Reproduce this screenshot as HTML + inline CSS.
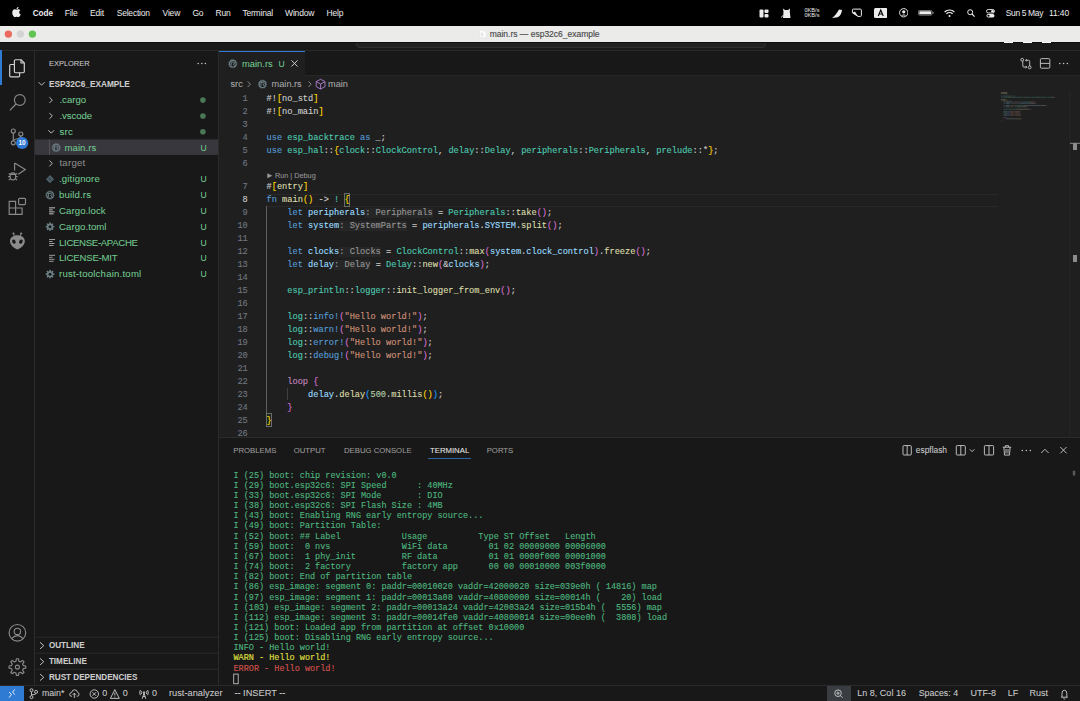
<!DOCTYPE html>
<html><head><meta charset="utf-8">
<style>
*{margin:0;padding:0;box-sizing:border-box}
html,body{width:1080px;height:701px;overflow:hidden;background:#181818;font-family:"Liberation Sans",sans-serif;}
.a{position:absolute;white-space:pre;}
.cl,.ln,.term{-webkit-text-stroke:0.12px currentColor;}
#side .a,#panel .a,#status .a,#editor .a{-webkit-text-stroke:0.06px currentColor;}
#menubar{position:absolute;left:0;top:0;width:1080px;height:26px;background:#000;}
#menubar .m{position:absolute;top:0;height:26px;line-height:26.5px;color:#ececec;font-size:8.5px;letter-spacing:-0.2px;}
#titlebar{position:absolute;left:0;top:26px;width:1080px;height:16.4px;background:#ebebea;z-index:2}
#strip{position:absolute;left:0;top:42px;width:1080px;height:9px;background:#191919;border-top:1px solid #0e0e0e;border-bottom:1px solid #292929;}
#act{position:absolute;left:0;top:51px;width:35px;height:634px;background:#181818;border-right:1px solid #2b2b2b;}
#side{position:absolute;left:35px;top:51px;width:184px;height:634px;background:#181818;border-right:1px solid #2b2b2b;}
#editor{position:absolute;left:219px;top:51px;width:861px;height:386px;background:#1f1f1f;}
#tabs{position:absolute;left:0;top:0;width:861px;height:24.6px;background:#181818;border-bottom:1px solid #262626;}
#panel{position:absolute;left:219px;top:437px;width:861px;height:248px;background:#181818;border-top:1px solid #2b2b2b;}
#status{position:absolute;left:0;top:685px;width:1080px;height:16px;background:#181818;border-top:1px solid #2b2b2b;}
.code{font-family:"Liberation Mono",monospace;font-size:8.666px;color:#cccccc;}
.ln{position:absolute;left:0;width:29px;padding-top:1.2px;text-align:right;color:#6e7681;font-family:"Liberation Mono",monospace;font-size:8.666px;}
.cl{position:absolute;left:47px;padding-top:1.2px;white-space:pre;font-family:"Liberation Mono",monospace;font-size:8.666px;color:#cccccc;height:12.9px;line-height:12.9px;}
.k{color:#569cd6}.t{color:#4ec9b0}.f{color:#dcdcaa}.v{color:#9cdcfe}.s{color:#ce9178}.n{color:#b5cea8}.p{color:#c586c0}
.b1{color:#ffd700}.b2{color:#da70d6}.b3{color:#179fff}
.h{color:#969696;background:#262626;}
.term{position:absolute;left:14px;padding-top:0px;padding-left:0.4px;white-space:pre;font-family:"Liberation Mono",monospace;font-size:8.5px;color:#4db67f;height:10.15px;line-height:10.15px;}
.si{position:absolute;left:0;width:183px;height:15.82px;line-height:15.82px;font-size:9.6px;color:#73c991;white-space:pre;}
.st{position:absolute;top:0;height:15px;line-height:15px;font-size:8.4px;color:#cccccc;white-space:pre;}
</style></head>
<body>
<div id="menubar">
<svg class="a" style="left:11.9px;top:7.4px" width="9" height="9.9" viewBox="0 0 170 200"><path fill="#ececec" d="M150 150c-8 18-12 26-22 42-14 21-34 48-59 48-22 0-28-14-58-14S-22 240-44 240s-0 0 0 0z" transform="translate(0,0)" style="display:none"/><path fill="#ececec" d="M140 106c0-26 21-38 22-39-12-18-31-20-37-20-16-2-31 9-39 9-8 0-20-9-34-9C34 48 17 58 8 74c-19 33-5 81 13 107 9 13 19 27 33 27 13-1 18-9 34-9 16 0 20 9 34 8 14 0 23-13 32-26 10-15 14-29 14-30 0 0-28-11-28-45zM115 30c7-9 12-21 11-33-10 1-23 7-30 16-7 8-13 20-11 32 11 1 23-6 30-15z"/></svg>
<div class="m" style="left:32.7px;font-weight:bold;font-size:8.2px;letter-spacing:0;line-height:27px">Code</div>
<div class="m" style="left:64.7px">File</div>
<div class="m" style="left:90px">Edit</div>
<div class="m" style="left:116.7px">Selection</div>
<div class="m" style="left:162.6px">View</div>
<div class="m" style="left:192.4px">Go</div>
<div class="m" style="left:215.5px">Run</div>
<div class="m" style="left:242.4px">Terminal</div>
<div class="m" style="left:285.1px">Window</div>
<div class="m" style="left:326.6px">Help</div>
<!-- right icons -->
<svg class="a" style="left:758.5px;top:8.5px" width="10" height="9" viewBox="0 0 10 9"><rect x="0.5" y="0.5" width="4" height="8" rx="1" fill="#ececec"/><rect x="5.5" y="0.5" width="4" height="3.5" rx="1" fill="#ececec"/><rect x="5.5" y="5" width="4" height="3.5" rx="1" fill="#ececec"/></svg>
<svg class="a" style="left:781px;top:8px" width="11" height="10" viewBox="0 0 11 10"><path d="M2 10 L2.5 4 L2 0.5 L4 2 L7 2 L9 0.5 L8.8 4 L9.5 10 Z" fill="#ececec"/><path d="M0.5 9.5 Q1 7 2.5 8" stroke="#ececec" stroke-width="0.8" fill="none"/></svg>
<div class="a" style="left:804.5px;top:7.5px;font-size:5.6px;line-height:5px;color:#ececec">0KB/s<br>0KB/s</div>
<svg class="a" style="left:832px;top:8.5px" width="10" height="9" viewBox="0 0 10 9"><path d="M0 9 C3 7 5 4 7 0.5 L10 1 C9.5 5 8 8 4 8.5 Z" fill="#ececec"/></svg>
<svg class="a" style="left:846px;top:4px" width="20" height="18" viewBox="846 4 20 18"><path d="M853.4 9.1 H860.4 Q861.4 9.1 861.4 10.1 V15.5 Q861.4 16.4 860.4 16.4 H858 L852.4 12.8 V10.1 Q852.4 9.1 853.4 9.1 Z" fill="none" stroke="#ececec" stroke-width="1"/><path d="M852.4 12.8 L855 11.4 L858 16.4 Z" fill="#ececec"/></svg>
<svg class="a" style="left:873.5px;top:8px" width="13.5" height="10" viewBox="0 0 13.5 10"><rect x="0" y="0" width="13.5" height="10" rx="1.5" fill="#ececec"/><path d="M4.3 8 L6.75 2 L9.2 8 M5.2 6 H8.3" stroke="#000" stroke-width="1.1" fill="none"/></svg>
<svg class="a" style="left:898.5px;top:8px" width="9.5" height="9.5" viewBox="0 0 10 10"><circle cx="5" cy="5" r="4.4" fill="none" stroke="#ececec" stroke-width="1"/><circle cx="5" cy="4" r="1.7" fill="#ececec"/><path d="M2 8 Q5 5.5 8 8" fill="#ececec"/></svg>
<svg class="a" style="left:918px;top:10.3px" width="16" height="5.5" viewBox="0 0 16 5.5"><rect x="0.4" y="0.4" width="13.6" height="4.7" rx="1.2" fill="none" stroke="#9a9a9a" stroke-width="0.8"/><rect x="1.3" y="1.2" width="11.8" height="3.1" rx="0.6" fill="#ececec"/><rect x="14.5" y="1.8" width="1" height="2" fill="#9a9a9a"/></svg>
<svg class="a" style="left:944.3px;top:8.7px" width="11" height="8" viewBox="0 0 11 8"><path d="M0.6 3 A7 7 0 0 1 10.4 3" stroke="#ececec" stroke-width="1.2" fill="none"/><path d="M2.4 4.8 A4.4 4.4 0 0 1 8.6 4.8" stroke="#ececec" stroke-width="1.2" fill="none"/><circle cx="5.5" cy="7" r="1" fill="#ececec"/></svg>
<svg class="a" style="left:966.8px;top:9px" width="8" height="8" viewBox="0 0 8 8"><circle cx="3.2" cy="3.2" r="2.5" stroke="#ececec" stroke-width="1" fill="none"/><path d="M5 5 L7.6 7.6" stroke="#ececec" stroke-width="1.1"/></svg>
<svg class="a" style="left:986px;top:8.5px" width="9" height="9" viewBox="0 0 9 9"><rect x="0.5" y="0.5" width="8" height="3.5" rx="1.7" fill="none" stroke="#ececec" stroke-width="0.9"/><circle cx="6.5" cy="2.25" r="1.3" fill="#ececec"/><rect x="0.5" y="5" width="8" height="3.5" rx="1.7" fill="#ececec"/><circle cx="2.5" cy="6.75" r="1.1" fill="#000"/></svg>
<div class="m" style="left:1005.8px;font-size:8.5px;letter-spacing:-0.38px">Sun 5 May</div>
<div class="m" style="left:1048.9px;font-size:8.5px;letter-spacing:-0.1px">11:40</div>
</div>
<div id="titlebar">
<div class="a" style="left:1004.2px;top:15.6px;width:8.7px;height:1.3px;background:#fafafa"></div><div class="a" style="left:1022.9px;top:15.6px;width:9.1px;height:1.3px;background:#fafafa"></div><div class="a" style="left:1041.7px;top:15.6px;width:9.1px;height:1.3px;background:#fafafa"></div>
<svg class="a" style="left:0;top:0" width="40" height="16.7" viewBox="0 26 40 16.7"><circle cx="8.35" cy="34.1" r="3.7" fill="#ec6a5e"/><circle cx="20.4" cy="34.1" r="3.7" fill="#d4d4d4"/><circle cx="32.4" cy="34.1" r="3.7" fill="#61c454"/></svg>
<svg class="a" style="left:479px;top:4px" width="8" height="8" viewBox="0 0 8 8"><path d="M0.5 0.3 H5 L7.3 2.6 V7.7 H0.5 Z" fill="#fbfbfb" stroke="#d8d8d8" stroke-width="0.4"/><path d="M1.8 3 H4 M1.8 4.3 H4.8 M1.8 5.6 H4" stroke="#c8c8c8" stroke-width="0.5"/></svg>
<div class="a" style="left:489.7px;top:1px;height:14px;line-height:14px;font-size:8.49px;color:#4a4a4a;-webkit-text-stroke:0.15px #4a4a4a">main.rs — esp32c6_example</div>
</div>
<div id="strip"><div class="a" style="left:355.5px;top:0;width:410px;height:4.6px;background:#212121;border:1px solid #2e2e2e;border-top:none;border-radius:0 0 4px 4px"></div></div>
<div id="act">
<div class="a" style="left:0;top:-1px;width:1.5px;height:35px;background:#2f7ad3"></div>
<svg class="a" style="left:0;top:0" width="35" height="634" viewBox="0 0 35 634">
 <g fill="none" stroke="#d4d4d4" stroke-width="1.15" stroke-linejoin="round">
  <path d="M14.2 13.5 H10.8 Q9.7 13.5 9.7 14.6 V24.7 Q9.7 25.8 10.8 25.8 H18.5 Q19.6 25.8 19.6 24.7 V21.8"/>
  <path d="M15.5 8.7 H21 L24.3 12 V20.6 Q24.3 21.7 23.2 21.7 H15.5 Q14.4 21.7 14.4 20.6 V9.8 Q14.4 8.7 15.5 8.7 Z"/>
  <path d="M21 8.7 V12 H24.3"/>
 </g>
 <g fill="none" stroke="#8a8a8a" stroke-width="1.15">
  <circle cx="19.8" cy="49" r="5.4"/>
  <path d="M16 53 L9.9 59.4"/>
  <circle cx="13.3" cy="80" r="2"/>
  <circle cx="20.8" cy="83" r="2"/>
  <circle cx="13.3" cy="91.8" r="2"/>
  <path d="M13.3 82 V89.8"/>
  <path d="M20.8 85 Q20.8 87.4 17.6 87.8 Q14.2 88.2 13.3 89.6"/>
  <path d="M14.6 112 V119.4 M14.6 112 L25.3 118.6 L18.3 123.3"/>
  <ellipse cx="12.9" cy="125.4" rx="2.75" ry="3.5"/>
  <path d="M10.5 123.3 H15.3 M8.7 122.4 L10.3 123.4 M17.1 122.4 L15.5 123.4 M8.2 125.6 H10.1 M15.7 125.6 H17.6 M8.7 128.9 L10.3 127.9 M17.1 128.9 L15.5 127.9"/>
  <path d="M9.2 150.4 H15.6 V163.4 H9.2 Z M9.2 157 H22.1 V163.4 H15.6"/>
  <rect x="18.6" y="147.3" width="6.9" height="6.3" rx="1"/>
 </g>
 <circle cx="22.1" cy="92" r="6.1" fill="#2f7ad3"/>
 <text x="22.1" y="94.3" text-anchor="middle" font-family="Liberation Sans" font-weight="bold" font-size="6.4" fill="#fff">10</text>
 <g fill="#8b8b8b">
  <path d="M17.4 184.3 C13 184.3 10 186.8 10 190.3 C10 194 14.3 197.5 17.4 198.6 C20.5 197.5 24.8 194 24.8 190.3 C24.8 186.8 21.8 184.3 17.4 184.3 Z"/>
  <circle cx="13.5" cy="182.5" r="1.1"/><circle cx="21.1" cy="182.5" r="1.1"/>
  <path d="M13.5 182.5 L14.2 185 M21.1 182.5 L20.4 185" stroke="#8b8b8b" stroke-width="0.8"/>
 </g>
 <g fill="#181818"><ellipse cx="13.9" cy="190.6" rx="1.7" ry="2.2" transform="rotate(-30 13.9 190.6)"/><ellipse cx="20.9" cy="190.6" rx="1.7" ry="2.2" transform="rotate(30 20.9 190.6)"/></g>
</svg>
<svg class="a" style="left:0;top:565px" width="35" height="70" viewBox="0 0 35 70">
 <g fill="none" stroke="#8a8a8a" stroke-width="1.15">
  <circle cx="17.4" cy="16.8" r="8.3"/>
  <circle cx="17.4" cy="15.4" r="3.2"/>
  <path d="M11.6 22.6 Q17.4 16.5 23.2 22.6"/>
  <path d="M16.35 42.77 L18.45 42.77 L18.82 45.17 L20.59 45.90 L22.55 44.46 L24.04 45.95 L22.60 47.91 L23.33 49.68 L25.73 50.05 L25.73 52.15 L23.33 52.52 L22.60 54.29 L24.04 56.25 L22.55 57.74 L20.59 56.30 L18.82 57.03 L18.45 59.43 L16.35 59.43 L15.98 57.03 L14.21 56.30 L12.25 57.74 L10.76 56.25 L12.20 54.29 L11.47 52.52 L9.07 52.15 L9.07 50.05 L11.47 49.68 L12.20 47.91 L10.76 45.95 L12.25 44.46 L14.21 45.90 L15.98 45.17 Z" stroke-linejoin="round"/>
  <circle cx="17.4" cy="51.1" r="2"/>
 </g>
</svg>
</div>
<div id="side">
<div class="a" style="left:14.00px;top:4.70px;height:16px;line-height:16px;font-size:7.45px;color:#cccccc">EXPLORER</div><svg class="a" style="left:0;top:0" width="184" height="634" viewBox="35 51 184 634"><circle cx="198.2" cy="63.6" r="0.75" fill="#cccccc"/><circle cx="201.8" cy="63.6" r="0.75" fill="#cccccc"/><circle cx="205.4" cy="63.6" r="0.75" fill="#cccccc"/><path d="M38.6 82.2 L41.6 85.2 L44.6 82.2" fill="none" stroke="#cccccc" stroke-width="0.9"/><rect x="35" y="139.4" width="183" height="15.5" fill="#37373d"/><path d="M49.5 139.4 V154.9" stroke="#585858" stroke-width="0.8"/><path d="M49.4 97.22 L52.3 100.12 L49.4 103.02" fill="none" stroke="#cccccc" stroke-width="0.9"/><path d="M49.4 113.04 L52.3 115.94 L49.4 118.84" fill="none" stroke="#cccccc" stroke-width="0.9"/><path d="M48.3 130.26 L51.2 133.16 L54.1 130.26" fill="none" stroke="#cccccc" stroke-width="0.9"/><path d="M49.4 160.50 L52.3 163.40 L49.4 166.30" fill="none" stroke="#cccccc" stroke-width="0.9"/><circle cx="202.9" cy="100.12" r="2.8" fill="#4a7856"/><circle cx="202.9" cy="115.94" r="2.8" fill="#4a7856"/><circle cx="202.9" cy="131.76" r="2.8" fill="#4a7856"/><circle cx="56.2" cy="147.57999999999998" r="3.3" fill="none" stroke="#6d8086" stroke-width="1.1"/><circle cx="56.2" cy="147.57999999999998" r="4.1" fill="none" stroke="#6d8086" stroke-width="0.9" stroke-dasharray="0.9 1.03"/><path d="M54.6 149.48 V145.98 H57.0 Q58.0 145.98 58.0 146.98 Q58.0 147.88 56.800000000000004 147.88 L58.1 149.48" fill="none" stroke="#6d8086" stroke-width="1"/><path d="M50 175.12 L54.1 179.22 L50 183.32 L45.9 179.22 Z" fill="#4b5f69"/><path d="M48.6 177.82 L51.2 180.42" stroke="#181818" stroke-width="0.7"/><circle cx="50.0" cy="195.04000000000002" r="3.3" fill="none" stroke="#6d8086" stroke-width="1.1"/><circle cx="50.0" cy="195.04000000000002" r="4.1" fill="none" stroke="#6d8086" stroke-width="0.9" stroke-dasharray="0.9 1.03"/><path d="M48.4 196.94000000000003 V193.44000000000003 H50.8 Q51.8 193.44000000000003 51.8 194.44000000000003 Q51.8 195.34000000000003 50.6 195.34000000000003 L51.9 196.94000000000003" fill="none" stroke="#6d8086" stroke-width="1"/><g stroke="#d6d6d6" stroke-width="0.9"><path d="M49.099999999999994 207.86 H55.099999999999994"/><path d="M49.099999999999994 209.86 H52.599999999999994"/><path d="M49.099999999999994 211.86 H54.599999999999994"/><path d="M49.099999999999994 213.86 H53.599999999999994"/></g><path d="M54.36 226.06 L54.36 227.30 L53.10 227.48 L52.75 228.31 L53.52 229.32 L52.64 230.20 L51.63 229.43 L50.80 229.78 L50.62 231.04 L49.38 231.04 L49.20 229.78 L48.37 229.43 L47.36 230.20 L46.48 229.32 L47.25 228.31 L46.90 227.48 L45.64 227.30 L45.64 226.06 L46.90 225.88 L47.25 225.05 L46.48 224.04 L47.36 223.16 L48.37 223.93 L49.20 223.58 L49.38 222.32 L50.62 222.32 L50.80 223.58 L51.63 223.93 L52.64 223.16 L53.52 224.04 L52.75 225.05 L53.10 225.88 Z" fill="#6d8086"/><circle cx="50" cy="226.68" r="1.5" fill="#181818"/><g stroke="#a8a8a8" stroke-width="0.9"><path d="M49.099999999999994 239.5 H55.099999999999994"/><path d="M49.099999999999994 241.5 H52.599999999999994"/><path d="M49.099999999999994 243.5 H54.599999999999994"/><path d="M49.099999999999994 245.5 H53.599999999999994"/></g><g stroke="#a8a8a8" stroke-width="0.9"><path d="M49.099999999999994 255.32 H55.099999999999994"/><path d="M49.099999999999994 257.32 H52.599999999999994"/><path d="M49.099999999999994 259.32 H54.599999999999994"/><path d="M49.099999999999994 261.32 H53.599999999999994"/></g><path d="M54.36 273.52 L54.36 274.76 L53.10 274.94 L52.75 275.77 L53.52 276.78 L52.64 277.66 L51.63 276.89 L50.80 277.24 L50.62 278.50 L49.38 278.50 L49.20 277.24 L48.37 276.89 L47.36 277.66 L46.48 276.78 L47.25 275.77 L46.90 274.94 L45.64 274.76 L45.64 273.52 L46.90 273.34 L47.25 272.51 L46.48 271.50 L47.36 270.62 L48.37 271.39 L49.20 271.04 L49.38 269.78 L50.62 269.78 L50.80 271.04 L51.63 271.39 L52.64 270.62 L53.52 271.50 L52.75 272.51 L53.10 273.34 Z" fill="#6d8086"/><circle cx="50" cy="274.14" r="1.5" fill="#181818"/><path d="M35 637.2 H218" stroke="#2b2b2b" stroke-width="1"/><path d="M35 653.2 H218" stroke="#2b2b2b" stroke-width="1"/><path d="M35 669.3 H218" stroke="#2b2b2b" stroke-width="1"/><path d="M40.0 642.30 L43.8 645.60 L40.0 648.90" fill="none" stroke="#cccccc" stroke-width="0.9"/><path d="M40.0 658.40 L43.8 661.70 L40.0 665.00" fill="none" stroke="#cccccc" stroke-width="0.9"/><path d="M40.0 674.00 L43.8 677.30 L40.0 680.60" fill="none" stroke="#cccccc" stroke-width="0.9"/></svg>
<div class="a" style="left:14.00px;top:26.10px;height:16px;line-height:16px;font-size:8.28px;font-weight:bold;color:#cccccc">ESP32C6_EXAMPLE</div><div class="a" style="left:24.40px;top:41.12px;height:16px;line-height:16px;font-size:9.6px;color:#73c991;letter-spacing:0.024px">.cargo</div><div class="a" style="left:24.40px;top:56.94px;height:16px;line-height:16px;font-size:9.6px;color:#73c991;letter-spacing:-0.047px">.vscode</div><div class="a" style="left:24.40px;top:72.76px;height:16px;line-height:16px;font-size:9.6px;color:#73c991;letter-spacing:0.352px">src</div><div class="a" style="left:29.50px;top:88.58px;height:16px;line-height:16px;font-size:9.6px;color:#73c991;letter-spacing:0.055px">main.rs</div><div class="a" style="left:24.40px;top:104.40px;height:16px;line-height:16px;font-size:9.6px;color:#8c8c8c;letter-spacing:0.271px">target</div><div class="a" style="left:24.00px;top:120.22px;height:16px;line-height:16px;font-size:9.6px;color:#73c991;letter-spacing:0.145px">.gitignore</div><div class="a" style="left:24.00px;top:136.04px;height:16px;line-height:16px;font-size:9.6px;color:#73c991;letter-spacing:0.150px">build.rs</div><div class="a" style="left:24.00px;top:151.86px;height:16px;line-height:16px;font-size:9.6px;color:#73c991;letter-spacing:0.090px">Cargo.lock</div><div class="a" style="left:24.00px;top:167.68px;height:16px;line-height:16px;font-size:9.6px;color:#73c991;letter-spacing:0.061px">Cargo.toml</div><div class="a" style="left:24.00px;top:183.50px;height:16px;line-height:16px;font-size:9.6px;color:#73c991;letter-spacing:-0.311px">LICENSE-APACHE</div><div class="a" style="left:24.00px;top:199.32px;height:16px;line-height:16px;font-size:9.6px;color:#73c991;letter-spacing:-0.211px">LICENSE-MIT</div><div class="a" style="left:24.00px;top:215.14px;height:16px;line-height:16px;font-size:9.6px;color:#73c991;letter-spacing:0.215px">rust-toolchain.toml</div><div class="a" style="left:165.60px;top:88.58px;height:16px;line-height:16px;font-size:8.6px;color:#73c991">U</div><div class="a" style="left:165.60px;top:120.22px;height:16px;line-height:16px;font-size:8.6px;color:#73c991">U</div><div class="a" style="left:165.60px;top:136.04px;height:16px;line-height:16px;font-size:8.6px;color:#73c991">U</div><div class="a" style="left:165.60px;top:151.86px;height:16px;line-height:16px;font-size:8.6px;color:#73c991">U</div><div class="a" style="left:165.60px;top:167.68px;height:16px;line-height:16px;font-size:8.6px;color:#73c991">U</div><div class="a" style="left:165.60px;top:183.50px;height:16px;line-height:16px;font-size:8.6px;color:#73c991">U</div><div class="a" style="left:165.60px;top:199.32px;height:16px;line-height:16px;font-size:8.6px;color:#73c991">U</div><div class="a" style="left:165.60px;top:215.14px;height:16px;line-height:16px;font-size:8.6px;color:#73c991">U</div><div class="a" style="left:13.90px;top:587.10px;height:16px;line-height:16px;font-size:8.15px;font-weight:bold;color:#cccccc">OUTLINE</div><div class="a" style="left:13.90px;top:603.30px;height:16px;line-height:16px;font-size:8.15px;font-weight:bold;color:#cccccc">TIMELINE</div><div class="a" style="left:13.90px;top:619.20px;height:16px;line-height:16px;font-size:8.15px;font-weight:bold;color:#cccccc">RUST DEPENDENCIES</div></div>
<div id="editor">
<div id="tabs"></div>
<div class="a" style="left:0;top:0;width:86px;height:25.6px;background:#1f1f1f;border-top:1px solid #2f7ad3;"></div><svg class="a" style="left:0;top:0" width="861" height="386" viewBox="219 51 861 386"><circle cx="232.8" cy="63.7" r="3.3" fill="none" stroke="#6d8086" stroke-width="1.1"/><circle cx="232.8" cy="63.7" r="4.1" fill="none" stroke="#6d8086" stroke-width="0.9" stroke-dasharray="0.9 1.03"/><path d="M231.20000000000002 65.60000000000001 V62.1 H233.60000000000002 Q234.60000000000002 62.1 234.60000000000002 63.1 Q234.60000000000002 64.0 233.4 64.0 L234.70000000000002 65.60000000000001" fill="none" stroke="#6d8086" stroke-width="1"/><path d="M291.4 60.3 L297.6 66.5 M297.6 60.3 L291.4 66.5" stroke="#cccccc" stroke-width="1"/><path d="M247.6 81.4 L250.4 84.2 L247.6 87" fill="none" stroke="#a0a0a0" stroke-width="0.8"/><path d="M308.4 81.4 L311.2 84.2 L308.4 87" fill="none" stroke="#a0a0a0" stroke-width="0.8"/><circle cx="262.5" cy="84.2" r="3.3" fill="none" stroke="#6d8086" stroke-width="1.1"/><circle cx="262.5" cy="84.2" r="4.1" fill="none" stroke="#6d8086" stroke-width="0.9" stroke-dasharray="0.9 1.03"/><path d="M260.9 86.10000000000001 V82.60000000000001 H263.3 Q264.3 82.60000000000001 264.3 83.60000000000001 Q264.3 84.5 263.1 84.5 L264.4 86.10000000000001" fill="none" stroke="#6d8086" stroke-width="1"/><g fill="none" stroke="#b180d7" stroke-width="0.9" stroke-linejoin="round"><path d="M320.6 79.3 L325 81.6 V86.6 L320.6 89 L316.2 86.6 V81.6 Z"/><path d="M316.2 81.6 L320.6 84 L325 81.6 M320.6 84 V89"/></g><g fill="none" stroke="#cccccc" stroke-width="0.9"><circle cx="1022.2" cy="59.8" r="1.4"/><circle cx="1029.7" cy="67.4" r="1.4"/><path d="M1022.8 61.2 V66 Q1022.8 67.1 1023.9 67.1 H1026.8 M1025.6 65.9 L1026.8 67.1 L1025.6 68.3 M1029.7 66 V61.4 Q1029.7 60.3 1028.6 60.3 H1025.6 M1026.8 59.1 L1025.6 60.3 L1026.8 61.5"/><rect x="1040.4" y="58.6" width="9.4" height="9.6" rx="1"/><path d="M1040.4 63.4 H1049.8"/></g><circle cx="1059.8" cy="63.4" r="0.75" fill="#cccccc"/><circle cx="1063.6" cy="63.4" r="0.75" fill="#cccccc"/><circle cx="1067.4" cy="63.4" r="0.75" fill="#cccccc"/></svg>
<div class="a" style="left:23.00px;top:5.70px;height:14px;line-height:14px;font-size:9.4px;color:#73c991">main.rs</div><div class="a" style="left:59.40px;top:5.70px;height:14px;line-height:14px;font-size:8.6px;color:#73c991">U</div><div class="a" style="left:11.50px;top:26.20px;height:14px;line-height:14px;font-size:9.2px;color:#a9a9a9">src</div><div class="a" style="left:52.60px;top:26.20px;height:14px;line-height:14px;font-size:9.2px;color:#a9a9a9">main.rs</div><div class="a" style="left:109.00px;top:26.20px;height:14px;line-height:14px;font-size:9.2px;color:#a9a9a9">main</div><div class="a" style="left:47.20px;top:142.75px;width:731.80px;height:12.95px;border-top:1px solid #282828;border-bottom:1px solid #282828"></div><div class="a" style="left:47.25px;top:155.20px;width:1px;height:207.20px;background:#5e5e5e"></div><div class="a" style="left:68.40px;top:336.50px;width:1px;height:12.95px;background:#404040"></div><div class="a" style="left:125.10px;top:142.15px;width:5.6px;height:13.8px;border:1px solid #6a6a6a;background:rgba(0,100,0,0.12)"></div><div class="a" style="left:47.10px;top:361.80px;width:5.6px;height:13.8px;border:1px solid #6a6a6a;background:rgba(0,100,0,0.12)"></div><div class="ln" style="left:-1.20px;width:30px;top:41.20px;height:12.9px;line-height:12.9px;color:#6e7681">1</div><div class="cl" style="left:47.50px;top:41.20px">#!<span class="b1">[</span>no_std<span class="b1">]</span></div>
<div class="ln" style="left:-1.20px;width:30px;top:54.15px;height:12.9px;line-height:12.9px;color:#6e7681">2</div><div class="cl" style="left:47.50px;top:54.15px">#!<span class="b1">[</span>no_main<span class="b1">]</span></div>
<div class="ln" style="left:-1.20px;width:30px;top:67.10px;height:12.9px;line-height:12.9px;color:#6e7681">3</div><div class="cl" style="left:47.50px;top:67.10px"></div>
<div class="ln" style="left:-1.20px;width:30px;top:80.05px;height:12.9px;line-height:12.9px;color:#6e7681">4</div><div class="cl" style="left:47.50px;top:80.05px"><span class="k">use</span> <span class="t">esp_backtrace</span> <span class="k">as</span> _;</div>
<div class="ln" style="left:-1.20px;width:30px;top:93.00px;height:12.9px;line-height:12.9px;color:#6e7681">5</div><div class="cl" style="left:47.50px;top:93.00px"><span class="k">use</span> <span class="t">esp_hal</span>::<span class="b1">{</span><span class="t">clock</span>::<span class="t">ClockControl</span>, <span class="t">delay</span>::<span class="t">Delay</span>, <span class="t">peripherals</span>::<span class="t">Peripherals</span>, <span class="t">prelude</span>::*<span class="b1">}</span>;</div>
<div class="ln" style="left:-1.20px;width:30px;top:105.95px;height:12.9px;line-height:12.9px;color:#6e7681">6</div><div class="cl" style="left:47.50px;top:105.95px"></div>
<div class="ln" style="left:-1.20px;width:30px;top:129.30px;height:12.9px;line-height:12.9px;color:#6e7681">7</div><div class="cl" style="left:47.50px;top:129.30px">#<span class="b1">[</span><span class="f">entry</span><span class="b1">]</span></div>
<div class="ln" style="left:-1.20px;width:30px;top:142.25px;height:12.9px;line-height:12.9px;color:#cccccc">8</div><div class="cl" style="left:47.50px;top:142.25px"><span class="k">fn</span> <span class="f">main</span><span class="b1">()</span> -&gt; <span class="t">!</span> <span class="b1">{</span></div>
<div class="ln" style="left:-1.20px;width:30px;top:155.20px;height:12.9px;line-height:12.9px;color:#6e7681">9</div><div class="cl" style="left:47.50px;top:155.20px">    <span class="k">let</span> <span class="v">peripherals</span><span class="h">: Peripherals</span> = <span class="t">Peripherals</span>::<span class="f">take</span><span class="b2">()</span>;</div>
<div class="ln" style="left:-1.20px;width:30px;top:168.15px;height:12.9px;line-height:12.9px;color:#6e7681">10</div><div class="cl" style="left:47.50px;top:168.15px">    <span class="k">let</span> <span class="v">system</span><span class="h">: SystemParts</span> = <span class="v">peripherals</span>.<span class="v">SYSTEM</span>.<span class="f">split</span><span class="b2">()</span>;</div>
<div class="ln" style="left:-1.20px;width:30px;top:181.10px;height:12.9px;line-height:12.9px;color:#6e7681">11</div><div class="cl" style="left:47.50px;top:181.10px"></div>
<div class="ln" style="left:-1.20px;width:30px;top:194.05px;height:12.9px;line-height:12.9px;color:#6e7681">12</div><div class="cl" style="left:47.50px;top:194.05px">    <span class="k">let</span> <span class="v">clocks</span><span class="h">: Clocks</span> = <span class="t">ClockControl</span>::<span class="f">max</span><span class="b2">(</span><span class="v">system</span>.<span class="v">clock_control</span><span class="b2">)</span>.<span class="f">freeze</span><span class="b2">()</span>;</div>
<div class="ln" style="left:-1.20px;width:30px;top:207.00px;height:12.9px;line-height:12.9px;color:#6e7681">13</div><div class="cl" style="left:47.50px;top:207.00px">    <span class="k">let</span> <span class="v">delay</span><span class="h">: Delay</span> = <span class="t">Delay</span>::<span class="f">new</span><span class="b2">(</span>&amp;<span class="v">clocks</span><span class="b2">)</span>;</div>
<div class="ln" style="left:-1.20px;width:30px;top:219.95px;height:12.9px;line-height:12.9px;color:#6e7681">14</div><div class="cl" style="left:47.50px;top:219.95px"></div>
<div class="ln" style="left:-1.20px;width:30px;top:232.90px;height:12.9px;line-height:12.9px;color:#6e7681">15</div><div class="cl" style="left:47.50px;top:232.90px">    <span class="t">esp_println</span>::<span class="t">logger</span>::<span class="f">init_logger_from_env</span><span class="b2">()</span>;</div>
<div class="ln" style="left:-1.20px;width:30px;top:245.85px;height:12.9px;line-height:12.9px;color:#6e7681">16</div><div class="cl" style="left:47.50px;top:245.85px"></div>
<div class="ln" style="left:-1.20px;width:30px;top:258.80px;height:12.9px;line-height:12.9px;color:#6e7681">17</div><div class="cl" style="left:47.50px;top:258.80px">    <span class="t">log</span>::<span class="k">info!</span><span class="b2">(</span><span class="s">"Hello world!"</span><span class="b2">)</span>;</div>
<div class="ln" style="left:-1.20px;width:30px;top:271.75px;height:12.9px;line-height:12.9px;color:#6e7681">18</div><div class="cl" style="left:47.50px;top:271.75px">    <span class="t">log</span>::<span class="k">warn!</span><span class="b2">(</span><span class="s">"Hello world!"</span><span class="b2">)</span>;</div>
<div class="ln" style="left:-1.20px;width:30px;top:284.70px;height:12.9px;line-height:12.9px;color:#6e7681">19</div><div class="cl" style="left:47.50px;top:284.70px">    <span class="t">log</span>::<span class="k">error!</span><span class="b2">(</span><span class="s">"Hello world!"</span><span class="b2">)</span>;</div>
<div class="ln" style="left:-1.20px;width:30px;top:297.65px;height:12.9px;line-height:12.9px;color:#6e7681">20</div><div class="cl" style="left:47.50px;top:297.65px">    <span class="t">log</span>::<span class="k">debug!</span><span class="b2">(</span><span class="s">"Hello world!"</span><span class="b2">)</span>;</div>
<div class="ln" style="left:-1.20px;width:30px;top:310.60px;height:12.9px;line-height:12.9px;color:#6e7681">21</div><div class="cl" style="left:47.50px;top:310.60px"></div>
<div class="ln" style="left:-1.20px;width:30px;top:323.55px;height:12.9px;line-height:12.9px;color:#6e7681">22</div><div class="cl" style="left:47.50px;top:323.55px">    <span class="p">loop</span> <span class="b2">{</span></div>
<div class="ln" style="left:-1.20px;width:30px;top:336.50px;height:12.9px;line-height:12.9px;color:#6e7681">23</div><div class="cl" style="left:47.50px;top:336.50px">        <span class="v">delay</span>.<span class="f">delay</span><span class="b3">(</span><span class="n">500</span>.<span class="f">millis</span><span class="b1">()</span><span class="b3">)</span>;</div>
<div class="ln" style="left:-1.20px;width:30px;top:349.45px;height:12.9px;line-height:12.9px;color:#6e7681">24</div><div class="cl" style="left:47.50px;top:349.45px">    <span class="b2">}</span></div>
<div class="ln" style="left:-1.20px;width:30px;top:362.40px;height:12.9px;line-height:12.9px;color:#6e7681">25</div><div class="cl" style="left:47.50px;top:362.40px"><span class="b1">}</span></div>
<div class="ln" style="left:-1.20px;width:30px;top:375.35px;height:12.9px;line-height:12.9px;color:#6e7681">26</div><div class="cl" style="left:47.50px;top:375.35px"></div>
<svg class="a" style="left:47.80px;top:122.10px" width="6" height="6" viewBox="0 0 6 6"><path d="M0.3 0.2 L5.4 2.75 L0.3 5.3 Z" fill="#999999"/></svg><div class="a" style="left:55.90px;top:119.40px;height:11px;line-height:11px;font-size:7.3px;color:#999999">Run | Debug</div>
</div>
<svg class="a" style="left:0;top:0" width="1080" height="437" viewBox="0 0 1080 437" id="mm"><rect x="1000.90" y="92.00" width="1.24" height="0.85" fill="#cccccc" fill-opacity="0.3"/><rect x="1002.14" y="92.00" width="0.62" height="0.85" fill="#ffd700" fill-opacity="0.3"/><rect x="1002.76" y="92.00" width="3.72" height="0.85" fill="#cccccc" fill-opacity="0.3"/><rect x="1006.48" y="92.00" width="0.62" height="0.85" fill="#ffd700" fill-opacity="0.3"/><rect x="1000.90" y="93.20" width="1.24" height="0.85" fill="#cccccc" fill-opacity="0.3"/><rect x="1002.14" y="93.20" width="0.62" height="0.85" fill="#ffd700" fill-opacity="0.3"/><rect x="1002.76" y="93.20" width="4.34" height="0.85" fill="#cccccc" fill-opacity="0.3"/><rect x="1007.10" y="93.20" width="0.62" height="0.85" fill="#ffd700" fill-opacity="0.3"/><rect x="1000.90" y="95.60" width="1.86" height="0.85" fill="#569cd6" fill-opacity="0.3"/><rect x="1003.38" y="95.60" width="8.06" height="0.85" fill="#4ec9b0" fill-opacity="0.3"/><rect x="1012.06" y="95.60" width="1.24" height="0.85" fill="#569cd6" fill-opacity="0.3"/><rect x="1013.92" y="95.60" width="1.24" height="0.85" fill="#cccccc" fill-opacity="0.3"/><rect x="1000.90" y="96.80" width="1.86" height="0.85" fill="#569cd6" fill-opacity="0.3"/><rect x="1003.38" y="96.80" width="4.34" height="0.85" fill="#4ec9b0" fill-opacity="0.3"/><rect x="1007.72" y="96.80" width="1.24" height="0.85" fill="#cccccc" fill-opacity="0.3"/><rect x="1008.96" y="96.80" width="0.62" height="0.85" fill="#ffd700" fill-opacity="0.3"/><rect x="1009.58" y="96.80" width="3.10" height="0.85" fill="#4ec9b0" fill-opacity="0.3"/><rect x="1012.68" y="96.80" width="1.24" height="0.85" fill="#cccccc" fill-opacity="0.3"/><rect x="1013.92" y="96.80" width="7.44" height="0.85" fill="#4ec9b0" fill-opacity="0.3"/><rect x="1021.36" y="96.80" width="0.62" height="0.85" fill="#cccccc" fill-opacity="0.3"/><rect x="1022.60" y="96.80" width="3.10" height="0.85" fill="#4ec9b0" fill-opacity="0.3"/><rect x="1025.70" y="96.80" width="1.24" height="0.85" fill="#cccccc" fill-opacity="0.3"/><rect x="1026.94" y="96.80" width="3.10" height="0.85" fill="#4ec9b0" fill-opacity="0.3"/><rect x="1030.04" y="96.80" width="0.62" height="0.85" fill="#cccccc" fill-opacity="0.3"/><rect x="1031.28" y="96.80" width="6.82" height="0.85" fill="#4ec9b0" fill-opacity="0.3"/><rect x="1038.10" y="96.80" width="1.24" height="0.85" fill="#cccccc" fill-opacity="0.3"/><rect x="1039.34" y="96.80" width="6.82" height="0.85" fill="#4ec9b0" fill-opacity="0.3"/><rect x="1046.16" y="96.80" width="0.62" height="0.85" fill="#cccccc" fill-opacity="0.3"/><rect x="1047.40" y="96.80" width="4.34" height="0.85" fill="#4ec9b0" fill-opacity="0.3"/><rect x="1051.74" y="96.80" width="1.86" height="0.85" fill="#cccccc" fill-opacity="0.3"/><rect x="1053.60" y="96.80" width="0.62" height="0.85" fill="#ffd700" fill-opacity="0.3"/><rect x="1054.22" y="96.80" width="0.62" height="0.85" fill="#cccccc" fill-opacity="0.3"/><rect x="1000.90" y="99.20" width="0.62" height="0.85" fill="#cccccc" fill-opacity="0.3"/><rect x="1001.52" y="99.20" width="0.62" height="0.85" fill="#ffd700" fill-opacity="0.3"/><rect x="1002.14" y="99.20" width="3.10" height="0.85" fill="#dcdcaa" fill-opacity="0.3"/><rect x="1005.24" y="99.20" width="0.62" height="0.85" fill="#ffd700" fill-opacity="0.3"/><rect x="1000.90" y="100.40" width="1.24" height="0.85" fill="#569cd6" fill-opacity="0.3"/><rect x="1002.76" y="100.40" width="2.48" height="0.85" fill="#dcdcaa" fill-opacity="0.3"/><rect x="1005.24" y="100.40" width="1.24" height="0.85" fill="#ffd700" fill-opacity="0.3"/><rect x="1007.10" y="100.40" width="1.24" height="0.85" fill="#cccccc" fill-opacity="0.3"/><rect x="1008.96" y="100.40" width="0.62" height="0.85" fill="#4ec9b0" fill-opacity="0.3"/><rect x="1010.20" y="100.40" width="0.62" height="0.85" fill="#ffd700" fill-opacity="0.3"/><rect x="1003.38" y="101.60" width="1.86" height="0.85" fill="#569cd6" fill-opacity="0.3"/><rect x="1005.86" y="101.60" width="6.82" height="0.85" fill="#9cdcfe" fill-opacity="0.3"/><rect x="1012.68" y="101.60" width="0.62" height="0.85" fill="#969696" fill-opacity="0.3"/><rect x="1013.92" y="101.60" width="6.82" height="0.85" fill="#969696" fill-opacity="0.3"/><rect x="1021.36" y="101.60" width="0.62" height="0.85" fill="#cccccc" fill-opacity="0.3"/><rect x="1022.60" y="101.60" width="6.82" height="0.85" fill="#4ec9b0" fill-opacity="0.3"/><rect x="1029.42" y="101.60" width="1.24" height="0.85" fill="#cccccc" fill-opacity="0.3"/><rect x="1030.66" y="101.60" width="2.48" height="0.85" fill="#dcdcaa" fill-opacity="0.3"/><rect x="1033.14" y="101.60" width="1.24" height="0.85" fill="#da70d6" fill-opacity="0.3"/><rect x="1034.38" y="101.60" width="0.62" height="0.85" fill="#cccccc" fill-opacity="0.3"/><rect x="1003.38" y="102.80" width="1.86" height="0.85" fill="#569cd6" fill-opacity="0.3"/><rect x="1005.86" y="102.80" width="3.72" height="0.85" fill="#9cdcfe" fill-opacity="0.3"/><rect x="1009.58" y="102.80" width="0.62" height="0.85" fill="#969696" fill-opacity="0.3"/><rect x="1010.82" y="102.80" width="6.82" height="0.85" fill="#969696" fill-opacity="0.3"/><rect x="1018.26" y="102.80" width="0.62" height="0.85" fill="#cccccc" fill-opacity="0.3"/><rect x="1019.50" y="102.80" width="6.82" height="0.85" fill="#9cdcfe" fill-opacity="0.3"/><rect x="1026.32" y="102.80" width="0.62" height="0.85" fill="#cccccc" fill-opacity="0.3"/><rect x="1026.94" y="102.80" width="3.72" height="0.85" fill="#9cdcfe" fill-opacity="0.3"/><rect x="1030.66" y="102.80" width="0.62" height="0.85" fill="#cccccc" fill-opacity="0.3"/><rect x="1031.28" y="102.80" width="3.10" height="0.85" fill="#dcdcaa" fill-opacity="0.3"/><rect x="1034.38" y="102.80" width="1.24" height="0.85" fill="#da70d6" fill-opacity="0.3"/><rect x="1035.62" y="102.80" width="0.62" height="0.85" fill="#cccccc" fill-opacity="0.3"/><rect x="1003.38" y="105.20" width="1.86" height="0.85" fill="#569cd6" fill-opacity="0.3"/><rect x="1005.86" y="105.20" width="3.72" height="0.85" fill="#9cdcfe" fill-opacity="0.3"/><rect x="1009.58" y="105.20" width="0.62" height="0.85" fill="#969696" fill-opacity="0.3"/><rect x="1010.82" y="105.20" width="3.72" height="0.85" fill="#969696" fill-opacity="0.3"/><rect x="1015.16" y="105.20" width="0.62" height="0.85" fill="#cccccc" fill-opacity="0.3"/><rect x="1016.40" y="105.20" width="7.44" height="0.85" fill="#4ec9b0" fill-opacity="0.3"/><rect x="1023.84" y="105.20" width="1.24" height="0.85" fill="#cccccc" fill-opacity="0.3"/><rect x="1025.08" y="105.20" width="1.86" height="0.85" fill="#dcdcaa" fill-opacity="0.3"/><rect x="1026.94" y="105.20" width="0.62" height="0.85" fill="#da70d6" fill-opacity="0.3"/><rect x="1027.56" y="105.20" width="3.72" height="0.85" fill="#9cdcfe" fill-opacity="0.3"/><rect x="1031.28" y="105.20" width="0.62" height="0.85" fill="#cccccc" fill-opacity="0.3"/><rect x="1031.90" y="105.20" width="8.06" height="0.85" fill="#9cdcfe" fill-opacity="0.3"/><rect x="1039.96" y="105.20" width="0.62" height="0.85" fill="#da70d6" fill-opacity="0.3"/><rect x="1040.58" y="105.20" width="0.62" height="0.85" fill="#cccccc" fill-opacity="0.3"/><rect x="1041.20" y="105.20" width="3.72" height="0.85" fill="#dcdcaa" fill-opacity="0.3"/><rect x="1044.92" y="105.20" width="1.24" height="0.85" fill="#da70d6" fill-opacity="0.3"/><rect x="1046.16" y="105.20" width="0.62" height="0.85" fill="#cccccc" fill-opacity="0.3"/><rect x="1003.38" y="106.40" width="1.86" height="0.85" fill="#569cd6" fill-opacity="0.3"/><rect x="1005.86" y="106.40" width="3.10" height="0.85" fill="#9cdcfe" fill-opacity="0.3"/><rect x="1008.96" y="106.40" width="0.62" height="0.85" fill="#969696" fill-opacity="0.3"/><rect x="1010.20" y="106.40" width="3.10" height="0.85" fill="#969696" fill-opacity="0.3"/><rect x="1013.92" y="106.40" width="0.62" height="0.85" fill="#cccccc" fill-opacity="0.3"/><rect x="1015.16" y="106.40" width="3.10" height="0.85" fill="#4ec9b0" fill-opacity="0.3"/><rect x="1018.26" y="106.40" width="1.24" height="0.85" fill="#cccccc" fill-opacity="0.3"/><rect x="1019.50" y="106.40" width="1.86" height="0.85" fill="#dcdcaa" fill-opacity="0.3"/><rect x="1021.36" y="106.40" width="0.62" height="0.85" fill="#da70d6" fill-opacity="0.3"/><rect x="1021.98" y="106.40" width="0.62" height="0.85" fill="#cccccc" fill-opacity="0.3"/><rect x="1022.60" y="106.40" width="3.72" height="0.85" fill="#9cdcfe" fill-opacity="0.3"/><rect x="1026.32" y="106.40" width="0.62" height="0.85" fill="#da70d6" fill-opacity="0.3"/><rect x="1026.94" y="106.40" width="0.62" height="0.85" fill="#cccccc" fill-opacity="0.3"/><rect x="1003.38" y="108.80" width="6.82" height="0.85" fill="#4ec9b0" fill-opacity="0.3"/><rect x="1010.20" y="108.80" width="1.24" height="0.85" fill="#cccccc" fill-opacity="0.3"/><rect x="1011.44" y="108.80" width="3.72" height="0.85" fill="#4ec9b0" fill-opacity="0.3"/><rect x="1015.16" y="108.80" width="1.24" height="0.85" fill="#cccccc" fill-opacity="0.3"/><rect x="1016.40" y="108.80" width="12.40" height="0.85" fill="#dcdcaa" fill-opacity="0.3"/><rect x="1028.80" y="108.80" width="1.24" height="0.85" fill="#da70d6" fill-opacity="0.3"/><rect x="1030.04" y="108.80" width="0.62" height="0.85" fill="#cccccc" fill-opacity="0.3"/><rect x="1003.38" y="111.20" width="1.86" height="0.85" fill="#4ec9b0" fill-opacity="0.3"/><rect x="1005.24" y="111.20" width="1.24" height="0.85" fill="#cccccc" fill-opacity="0.3"/><rect x="1006.48" y="111.20" width="3.10" height="0.85" fill="#569cd6" fill-opacity="0.3"/><rect x="1009.58" y="111.20" width="0.62" height="0.85" fill="#da70d6" fill-opacity="0.3"/><rect x="1010.20" y="111.20" width="3.72" height="0.85" fill="#ce9178" fill-opacity="0.3"/><rect x="1014.54" y="111.20" width="4.34" height="0.85" fill="#ce9178" fill-opacity="0.3"/><rect x="1018.88" y="111.20" width="0.62" height="0.85" fill="#da70d6" fill-opacity="0.3"/><rect x="1019.50" y="111.20" width="0.62" height="0.85" fill="#cccccc" fill-opacity="0.3"/><rect x="1003.38" y="112.40" width="1.86" height="0.85" fill="#4ec9b0" fill-opacity="0.3"/><rect x="1005.24" y="112.40" width="1.24" height="0.85" fill="#cccccc" fill-opacity="0.3"/><rect x="1006.48" y="112.40" width="3.10" height="0.85" fill="#569cd6" fill-opacity="0.3"/><rect x="1009.58" y="112.40" width="0.62" height="0.85" fill="#da70d6" fill-opacity="0.3"/><rect x="1010.20" y="112.40" width="3.72" height="0.85" fill="#ce9178" fill-opacity="0.3"/><rect x="1014.54" y="112.40" width="4.34" height="0.85" fill="#ce9178" fill-opacity="0.3"/><rect x="1018.88" y="112.40" width="0.62" height="0.85" fill="#da70d6" fill-opacity="0.3"/><rect x="1019.50" y="112.40" width="0.62" height="0.85" fill="#cccccc" fill-opacity="0.3"/><rect x="1003.38" y="113.60" width="1.86" height="0.85" fill="#4ec9b0" fill-opacity="0.3"/><rect x="1005.24" y="113.60" width="1.24" height="0.85" fill="#cccccc" fill-opacity="0.3"/><rect x="1006.48" y="113.60" width="3.72" height="0.85" fill="#569cd6" fill-opacity="0.3"/><rect x="1010.20" y="113.60" width="0.62" height="0.85" fill="#da70d6" fill-opacity="0.3"/><rect x="1010.82" y="113.60" width="3.72" height="0.85" fill="#ce9178" fill-opacity="0.3"/><rect x="1015.16" y="113.60" width="4.34" height="0.85" fill="#ce9178" fill-opacity="0.3"/><rect x="1019.50" y="113.60" width="0.62" height="0.85" fill="#da70d6" fill-opacity="0.3"/><rect x="1020.12" y="113.60" width="0.62" height="0.85" fill="#cccccc" fill-opacity="0.3"/><rect x="1003.38" y="114.80" width="1.86" height="0.85" fill="#4ec9b0" fill-opacity="0.3"/><rect x="1005.24" y="114.80" width="1.24" height="0.85" fill="#cccccc" fill-opacity="0.3"/><rect x="1006.48" y="114.80" width="3.72" height="0.85" fill="#569cd6" fill-opacity="0.3"/><rect x="1010.20" y="114.80" width="0.62" height="0.85" fill="#da70d6" fill-opacity="0.3"/><rect x="1010.82" y="114.80" width="3.72" height="0.85" fill="#ce9178" fill-opacity="0.3"/><rect x="1015.16" y="114.80" width="4.34" height="0.85" fill="#ce9178" fill-opacity="0.3"/><rect x="1019.50" y="114.80" width="0.62" height="0.85" fill="#da70d6" fill-opacity="0.3"/><rect x="1020.12" y="114.80" width="0.62" height="0.85" fill="#cccccc" fill-opacity="0.3"/><rect x="1003.38" y="117.20" width="2.48" height="0.85" fill="#c586c0" fill-opacity="0.3"/><rect x="1006.48" y="117.20" width="0.62" height="0.85" fill="#da70d6" fill-opacity="0.3"/><rect x="1005.86" y="118.40" width="3.10" height="0.85" fill="#9cdcfe" fill-opacity="0.3"/><rect x="1008.96" y="118.40" width="0.62" height="0.85" fill="#cccccc" fill-opacity="0.3"/><rect x="1009.58" y="118.40" width="3.10" height="0.85" fill="#dcdcaa" fill-opacity="0.3"/><rect x="1012.68" y="118.40" width="0.62" height="0.85" fill="#179fff" fill-opacity="0.3"/><rect x="1013.30" y="118.40" width="1.86" height="0.85" fill="#b5cea8" fill-opacity="0.3"/><rect x="1015.16" y="118.40" width="0.62" height="0.85" fill="#cccccc" fill-opacity="0.3"/><rect x="1015.78" y="118.40" width="3.72" height="0.85" fill="#dcdcaa" fill-opacity="0.3"/><rect x="1019.50" y="118.40" width="1.24" height="0.85" fill="#ffd700" fill-opacity="0.3"/><rect x="1020.74" y="118.40" width="0.62" height="0.85" fill="#179fff" fill-opacity="0.3"/><rect x="1021.36" y="118.40" width="0.62" height="0.85" fill="#cccccc" fill-opacity="0.3"/><rect x="1003.38" y="119.60" width="0.62" height="0.85" fill="#da70d6" fill-opacity="0.3"/><rect x="1000.90" y="120.80" width="0.62" height="0.85" fill="#ffd700" fill-opacity="0.3"/><rect x="1069.5" y="92" width="0.8" height="345" fill="#2a2a2a"/><rect x="1070" y="142.8" width="10" height="1" fill="#8c8c8c"/><rect x="1073" y="143" width="4" height="7" fill="#8c8c8c"/><rect x="1073" y="255" width="4" height="7" fill="#8c8c8c"/></svg>
<div id="panel">
<div class="a" style="left:14.30px;top:6.00px;height:14px;line-height:14px;font-size:7.75px;color:#9d9d9d">PROBLEMS</div><div class="a" style="left:74.70px;top:6.00px;height:14px;line-height:14px;font-size:7.75px;color:#9d9d9d">OUTPUT</div><div class="a" style="left:125.00px;top:6.00px;height:14px;line-height:14px;font-size:7.75px;color:#9d9d9d">DEBUG CONSOLE</div><div class="a" style="left:211.00px;top:6.00px;height:14px;line-height:14px;font-size:7.75px;color:#e7e7e7">TERMINAL</div><div class="a" style="left:267.70px;top:6.00px;height:14px;line-height:14px;font-size:7.75px;color:#9d9d9d">PORTS</div><div class="a" style="left:209.30px;top:20.20px;width:42.4px;height:1px;background:#2d64a8"></div><div class="a" style="left:696.80px;top:5.30px;height:14px;line-height:14px;font-size:8.4px;color:#cccccc">espflash</div><svg class="a" style="left:0;top:0" width="861" height="248" viewBox="219 437 861 248"><g fill="none" stroke="#cccccc" stroke-width="0.9"><rect x="903" y="444.6" width="8.3" height="9.4" rx="0.8"/><path d="M907.15 444.6 V454"/><rect x="956.3" y="444.6" width="9" height="9.4" rx="0.8"/><path d="M960.8 444.6 V454"/><path d="M969.8 448.3 L972.1 450.6 L974.4 448.3"/><rect x="984.4" y="444.6" width="9.2" height="9.4" rx="0.8"/><path d="M989 444.6 V454"/><path d="M1002.8 446.2 H1011.2 M1005.4 446.2 V444.7 H1008.6 V446.2 M1003.9 446.2 L1004.5 454.1 H1009.5 L1010.1 446.2 M1006 448 V452.5 M1008 448 V452.5"/><path d="M1041.2 452 L1044.9 448.3 L1048.6 452"/><path d="M1060.3 446 L1066.6 452.3 M1066.6 446 L1060.3 452.3"/></g><circle cx="1022.3" cy="449.5" r="0.75" fill="#cccccc"/><circle cx="1026.3" cy="449.5" r="0.75" fill="#cccccc"/><circle cx="1030.3" cy="449.5" r="0.75" fill="#cccccc"/><rect x="1072.8" y="469.7" width="2.4" height="4.8" fill="#5a5a5a"/><rect x="233.7" y="673.1" width="4.5" height="9.6" fill="none" stroke="#bdbdbd" stroke-width="0.9"/></svg>
<div class="term" style="left:14.10px;top:32.73px">I (25) boot: chip revision: v0.0</div>
<div class="term" style="left:14.10px;top:42.87px">I (29) boot.esp32c6: SPI Speed      : 40MHz</div>
<div class="term" style="left:14.10px;top:53.03px">I (33) boot.esp32c6: SPI Mode       : DIO</div>
<div class="term" style="left:14.10px;top:63.17px">I (38) boot.esp32c6: SPI Flash Size : 4MB</div>
<div class="term" style="left:14.10px;top:73.32px">I (43) boot: Enabling RNG early entropy source...</div>
<div class="term" style="left:14.10px;top:83.47px">I (49) boot: Partition Table:</div>
<div class="term" style="left:14.10px;top:93.63px">I (52) boot: ## Label            Usage          Type ST Offset   Length</div>
<div class="term" style="left:14.10px;top:103.78px">I (59) boot:  0 nvs              WiFi data        01 02 00009000 00006000</div>
<div class="term" style="left:14.10px;top:113.92px">I (67) boot:  1 phy_init         RF data          01 01 0000f000 00001000</div>
<div class="term" style="left:14.10px;top:124.07px">I (74) boot:  2 factory          factory app      00 00 00010000 003f0000</div>
<div class="term" style="left:14.10px;top:134.22px">I (82) boot: End of partition table</div>
<div class="term" style="left:14.10px;top:144.38px">I (86) esp_image: segment 0: paddr=00010020 vaddr=42000020 size=039e0h ( 14816) map</div>
<div class="term" style="left:14.10px;top:154.53px">I (97) esp_image: segment 1: paddr=00013a08 vaddr=40800000 size=00014h (    20) load</div>
<div class="term" style="left:14.10px;top:164.68px">I (103) esp_image: segment 2: paddr=00013a24 vaddr=42003a24 size=015b4h (  5556) map</div>
<div class="term" style="left:14.10px;top:174.82px">I (112) esp_image: segment 3: paddr=00014fe0 vaddr=40800014 size=00ee0h (  3808) load</div>
<div class="term" style="left:14.10px;top:184.97px">I (121) boot: Loaded app from partition at offset 0x10000</div>
<div class="term" style="left:14.10px;top:195.13px">I (125) boot: Disabling RNG early entropy source...</div>
<div class="term" style="left:14.10px;top:205.28px;color:#4db67f">INFO - Hello world!</div>
<div class="term" style="left:14.10px;top:215.43px;color:#e0e040">WARN - Hello world!</div>
<div class="term" style="left:14.10px;top:225.57px;color:#d3524d">ERROR - Hello world!</div>
</div>
<div id="status">
<div class="a" style="left:0;top:0;width:24.4px;height:16px;background:#2f7ad3"></div><div class="a" style="left:826.7px;top:0;width:24.6px;height:16px;background:#393c40"></div><svg class="a" style="left:0;top:-1px" width="1080" height="17" viewBox="0 684 1080 17"><g fill="none" stroke="#cccccc" stroke-width="0.9"><path d="M9.1 691.2 L11.5 693.4 L9.1 696.6 M14.8 688.4 L12.6 691 L14.8 693.6" stroke="#e8eef8" stroke-width="1"/><circle cx="31.5" cy="689.2" r="1.5"/><circle cx="31.5" cy="696.2" r="1.5"/><circle cx="36.1" cy="690.9" r="1.5"/><path d="M31.5 690.7 V694.7 M36.1 692.4 Q36.1 693.6 31.5 693.9"/><path d="M72 695.2 H71.2 Q69.7 695.2 69.7 693.4 Q69.7 691.6 71.6 691.6 Q72 688.8 74.6 688.8 Q77.2 688.8 77.6 691.4 Q79 691.6 79 693.3 Q79 695.2 77.4 695.2 H76.6 M74.3 697 V692.2 M72.7 693.8 L74.3 692.2 L75.9 693.8"/><circle cx="94.3" cy="693" r="4.2"/><path d="M92.5 691.2 L96.1 694.8 M96.1 691.2 L92.5 694.8"/><path d="M114.85 688.6 L119.3 697.4 H110.4 Z M114.85 691.6 V694.5 M114.85 695.6 V696.4" stroke-linejoin="round"/><path d="M144 692 L142.2 697.8 M144 692 L145.8 697.8 M142.9 695.5 H145.1 M141.6 690.2 Q140.8 691.6 141.6 693 M146.4 690.2 Q147.2 691.6 146.4 693 M140.4 689 Q138.9 691.6 140.4 694.2 M147.6 689 Q149.1 691.6 147.6 694.2"/><circle cx="144" cy="691.4" r="0.7" fill="#cccccc"/><circle cx="838" cy="692.2" r="3.3"/><path d="M840.4 694.6 L842.6 696.8 M836.3 692.2 H839.7 M838 690.5 V693.9"/><path d="M1061 696.2 H1067.8 M1062 696.2 V692.4 Q1062 689.2 1064.4 689.2 Q1066.8 689.2 1066.8 692.4 V696.2 M1063.4 697.6 Q1064.4 698.6 1065.4 697.6"/></g></svg><div class="a" style="left:41.90px;top:0.00px;height:14px;line-height:14px;font-size:8.8px;color:#cccccc">main*</div><div class="a" style="left:102.20px;top:0.00px;height:14px;line-height:14px;font-size:9px;color:#cccccc">0</div><div class="a" style="left:122.70px;top:0.00px;height:14px;line-height:14px;font-size:9px;color:#cccccc">0</div><div class="a" style="left:151.90px;top:0.00px;height:14px;line-height:14px;font-size:9px;color:#cccccc">0</div><div class="a" style="left:169.00px;top:0.00px;height:14px;line-height:14px;font-size:9.27px;color:#cccccc">rust-analyzer</div><div class="a" style="left:234.40px;top:0.00px;height:14px;line-height:14px;font-size:9.25px;color:#cccccc">-- INSERT --</div><div class="a" style="left:857.30px;top:0.00px;height:14px;line-height:14px;font-size:9.03px;color:#cccccc">Ln 8, Col 16</div><div class="a" style="left:918.70px;top:0.00px;height:14px;line-height:14px;font-size:8.9px;color:#cccccc">Spaces: 4</div><div class="a" style="left:970.50px;top:0.00px;height:14px;line-height:14px;font-size:9.0px;color:#cccccc">UTF-8</div><div class="a" style="left:1007.80px;top:0.00px;height:14px;line-height:14px;font-size:9.0px;color:#cccccc">LF</div><div class="a" style="left:1029.40px;top:0.00px;height:14px;line-height:14px;font-size:9.0px;color:#cccccc">Rust</div></div>
</body></html>
